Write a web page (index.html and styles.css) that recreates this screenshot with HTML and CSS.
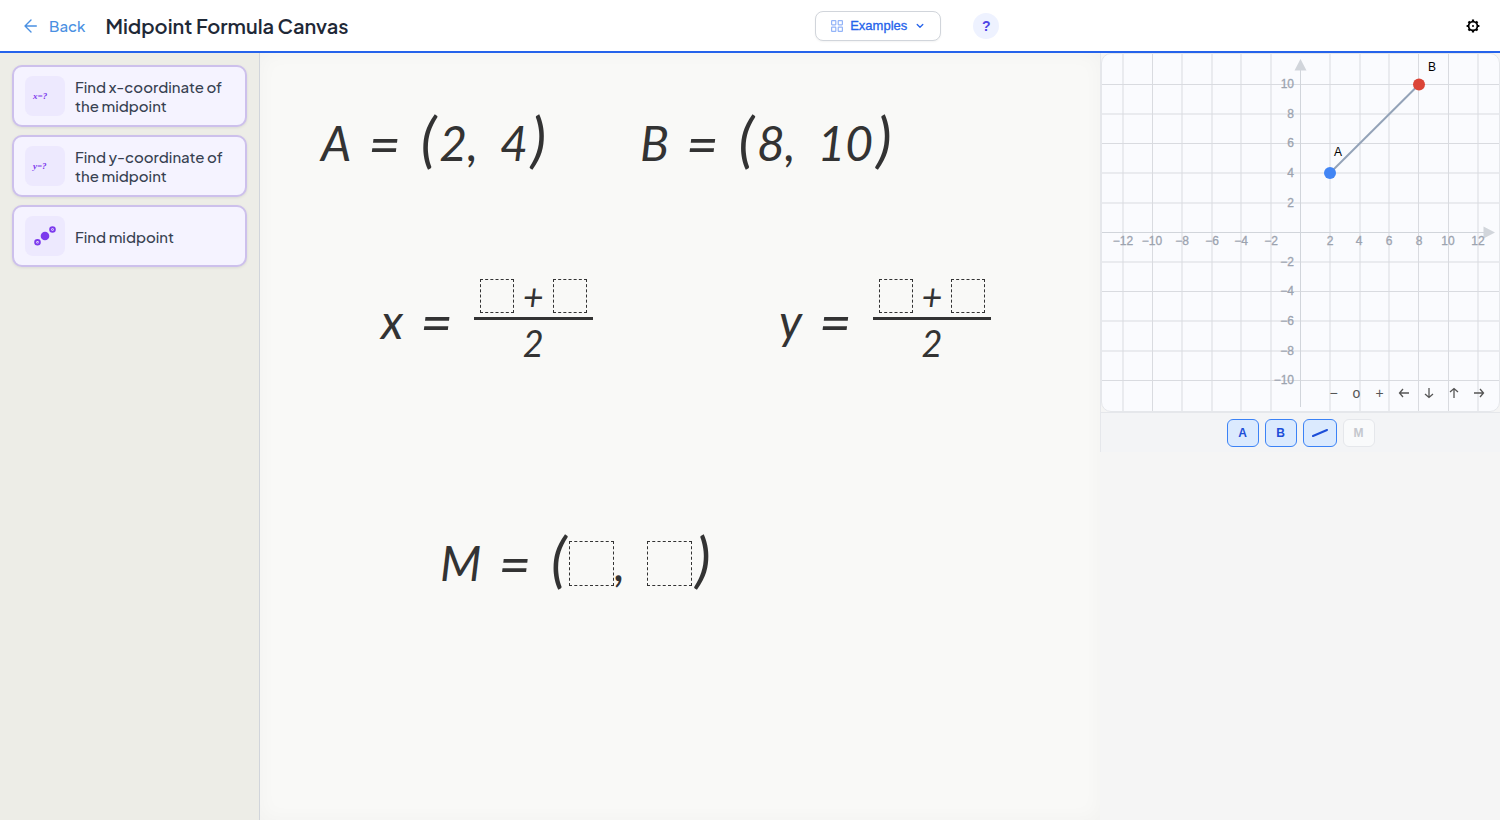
FILE: index.html
```
<!DOCTYPE html>
<html lang="en">
<head>
  <meta charset="UTF-8" />
  <meta name="viewport" content="width=device-width, initial-scale=1.0"/>
  <title>Midpoint Formula Canvas</title>
  <link rel="stylesheet" href="styles.css">
</head>
<body>
  <header class="topbar">
    <div class="topbar-left">
      <a href="#" class="back">
        <svg width="13" height="14" viewBox="0 0 13 14" fill="none" stroke="currentColor" stroke-width="1.4" stroke-linecap="round" stroke-linejoin="round"><path d="M12.3 7H1M7 1L1 7l6 6"/></svg>
        Back
      </a>
      <h1>Midpoint Formula Canvas</h1>
    </div>
    <div class="topbar-center">
      <button class="examples">
        <svg width="12" height="12" viewBox="0 0 12 12" fill="none" stroke="#93b4f8" stroke-width="1.2"><rect x="0.6" y="0.6" width="4.2" height="4.2" rx="0.5"/><rect x="7.2" y="0.6" width="4.2" height="4.2" rx="0.5"/><rect x="0.6" y="7.2" width="4.2" height="4.2" rx="0.5"/><rect x="7.2" y="7.2" width="4.2" height="4.2" rx="0.5"/></svg>
        <span>Examples</span>
        <svg class="chevron" width="8" height="6" viewBox="0 0 8 6" fill="none" stroke="currentColor" stroke-width="1.3" stroke-linecap="round" stroke-linejoin="round"><path d="M1.2 1.5L4 4.3l2.8-2.8"/></svg>
      </button>
      <button class="help">?</button>
    </div>
    <button class="settings" aria-label="Settings">
      <svg width="14" height="14" viewBox="0 0 14 14" fill="none" stroke="#000"><circle cx="7" cy="7" r="4.4" stroke-width="1.8"/><circle cx="7" cy="7" r="1" fill="#000" stroke="none"/><path stroke-width="2.2" d="M7 2.6V.6M7 11.4v2M2.6 7H.6M11.4 7h2M3.9 3.9L2.5 2.5M10.1 10.1l1.4 1.4M3.9 10.1l-1.4 1.4M10.1 3.9l1.4-1.4"/></svg>
    </button>
  </header>

  <main class="workspace">
    <aside class="sidebar">
      <button class="step">
        <span class="step-icon"><span class="step-formula">x=?</span></span>
        <span class="step-label">Find x-coordinate of the midpoint</span>
      </button>
      <button class="step">
        <span class="step-icon"><span class="step-formula">y=?</span></span>
        <span class="step-label">Find y-coordinate of the midpoint</span>
      </button>
      <button class="step">
        <span class="step-icon">
          <svg width="24" height="24" viewBox="0 0 24 24" fill="none" stroke="#7c3aed" stroke-width="2"><circle cx="12" cy="12" r="4.3" fill="#7c3aed" stroke="none"/><circle cx="19.5" cy="5.5" r="2.3" fill="#ede9fe"/><circle cx="4.5" cy="18.3" r="2.3" fill="#ede9fe"/><path stroke-width="0.8" d="M4 17.8l1.2 1.2M19 5l1 1"/></svg>
        </span>
        <span class="step-label">Find midpoint</span>
      </button>
    </aside>

    <section class="canvas">
      <div class="expr expr-a">
        <span>A</span><span class="equals">=</span>
        <span class="tuple"><span class="paren">(</span><span>2,</span><span class="second">4</span><span class="paren">)</span></span>
      </div>
      <div class="expr expr-b">
        <span>B</span><span class="equals">=</span>
        <span class="tuple"><span class="paren">(</span><span>8,</span><span class="second">10</span><span class="paren">)</span></span>
      </div>
      <div class="expr expr-x">
        <span>x</span><span class="equals">=</span>
        <span class="fraction">
          <span class="numerator"><span class="slot small"></span><span>+</span><span class="slot small"></span></span>
          <span class="denominator">2</span>
        </span>
      </div>
      <div class="expr expr-y">
        <span>y</span><span class="equals">=</span>
        <span class="fraction">
          <span class="numerator"><span class="slot small"></span><span>+</span><span class="slot small"></span></span>
          <span class="denominator">2</span>
        </span>
      </div>
      <div class="expr expr-m">
        <span>M</span><span class="equals">=</span>
        <span class="tuple"><span class="paren">(</span><span class="slot"></span><span>,</span><span class="slot second"></span><span class="paren">)</span></span>
      </div>
    </section>

    <aside class="graph-panel">
      <div class="board">
        <svg class="plot" viewBox="0 0 397 357">
          <path class="grid" d="M21 0V357M50.5 0V357M80 0V357M110 0V357M139 0V357M169 0V357M228 0V357M258 0V357M287 0V357M316.5 0V357M346.5 0V357M376 0V357M0 30.5H397M0 60H397M0 89.5H397M0 119H397M0 149H397M0 208H397M0 237.5H397M0 267H397M0 297H397M0 326.5H397"/>
          <path class="axis" d="M0 178.5H384M198.5 16V353"/>
          <path class="arrow" d="M198.5 5l6 11.5h-12zM393 178.5l-11.5-6v12z"/>
          <g class="ticks x-ticks">
            <text x="21" y="191">−12</text><text x="50" y="191">−10</text><text x="80" y="191">−8</text><text x="110" y="191">−6</text><text x="139" y="191">−4</text><text x="169" y="191">−2</text>
            <text x="228" y="191">2</text><text x="257" y="191">4</text><text x="287" y="191">6</text><text x="317" y="191">8</text><text x="346" y="191">10</text><text x="376" y="191">12</text>
          </g>
          <g class="ticks y-ticks">
            <text x="192" y="34">10</text><text x="192" y="64">8</text><text x="192" y="93">6</text><text x="192" y="123">4</text><text x="192" y="153">2</text>
            <text x="192" y="212">−2</text><text x="192" y="241">−4</text><text x="192" y="271">−6</text><text x="192" y="301">−8</text><text x="192" y="330">−10</text>
          </g>
          <path class="segment" d="M228 119L317 30.5"/>
          <circle cx="228" cy="119" r="6" fill="#4285f4"/>
          <circle cx="317" cy="30.5" r="6" fill="#db4437"/>
          <text class="point" x="232" y="102">A</text>
          <text class="point" x="326" y="17">B</text>
        </svg>
        <div class="nav">
          <button aria-label="Zoom out">−</button>
          <button aria-label="Reset view">o</button>
          <button aria-label="Zoom in">+</button>
          <button class="pan" aria-label="Pan left"><svg width="12" height="12" viewBox="0 0 12 12"><path d="M11 6H1.5M5 2L1.5 6 5 10"/></svg></button>
          <button class="pan" aria-label="Pan down"><svg width="12" height="12" viewBox="0 0 12 12"><path d="M6 1v9.5M2 7l4 3.5L10 7"/></svg></button>
          <button class="pan" aria-label="Pan up"><svg width="12" height="12" viewBox="0 0 12 12"><path d="M6 11V1.5M2 5l4-3.5L10 5"/></svg></button>
          <button class="pan" aria-label="Pan right"><svg width="12" height="12" viewBox="0 0 12 12"><path d="M1 6h9.5M7 2l3.5 4L7 10"/></svg></button>
        </div>
      </div>
      <div class="toggles">
        <button class="toggle active">A</button>
        <button class="toggle active">B</button>
        <button class="toggle active" aria-label="Segment"><svg width="16" height="8" viewBox="0 0 16 8"><path d="M1 7L15 1" stroke="#1d4ed8" stroke-width="2" stroke-linecap="round"/></svg></button>
        <button class="toggle" disabled>M</button>
      </div>
    </aside>
  </main>
</body>
</html>
```
FILE: styles.css
```
* {
  box-sizing: border-box;
}

body {
  margin: 0;
  min-height: 100vh;
  display: flex;
  flex-direction: column;
  background: #f5f5f5;
  font-family: 'Plus Jakarta Sans', Inter, sans-serif;
  color: #1f2937;
}

button {
  font-family: inherit;
  cursor: pointer;
}

.topbar {
  display: flex;
  align-items: center;
  justify-content: space-between;
  height: 53px;
  padding: 0 20px 0 24px;
  background: #fff;
  border-bottom: 2px solid #2563eb;
}

.topbar-left {
  display: flex;
  align-items: center;
  gap: 20px;
}

.back {
  display: flex;
  align-items: center;
  gap: 12px;
  color: #4a90e2;
  font-size: 15px;
  font-weight: 500;
  text-decoration: none;
}

h1 {
  margin: 0;
  font-size: 20px;
  font-weight: 600;
}

.topbar-center {
  display: flex;
  align-items: center;
  gap: 32px;
}

.examples {
  display: flex;
  align-items: center;
  gap: 7px;
  height: 30px;
  padding: 0 16px 0 15px;
  border: 1px solid #d1d5db;
  border-radius: 8px;
  background: #fff;
  box-shadow: 0 1px 2px rgba(0, 0, 0, 0.05);
  color: #2563eb;
  font-family: 'Liberation Sans', Arial, sans-serif;
  font-size: 13px;
  -webkit-text-stroke: 0.3px;
}

.chevron {
  margin-left: 2px;
}

.help {
  width: 26px;
  height: 26px;
  padding: 0;
  border: none;
  border-radius: 50%;
  background: #eef2ff;
  color: #4f46e5;
  font-family: 'Liberation Sans', Arial, sans-serif;
  font-size: 14px;
  font-weight: 700;
}

.settings {
  display: flex;
  padding: 0;
  border: none;
  background: none;
}

.workspace {
  flex: 1;
  display: grid;
  grid-template-columns: 260px 1fr 400px;
}

/* Sidebar */
.sidebar {
  display: flex;
  flex-direction: column;
  gap: 8px;
  padding: 12px;
  background: #edede7;
  border-right: 1px solid #d1d5db;
}

.step {
  display: flex;
  align-items: center;
  gap: 10px;
  padding: 9px 11px;
  border: 2px solid #cdc0ec;
  border-radius: 10px;
  background: #f5f3ff;
  box-shadow: 0 1px 3px rgba(0, 0, 0, 0.08);
  text-align: left;
}

.step-icon {
  flex: none;
  display: flex;
  align-items: center;
  width: 40px;
  height: 40px;
  padding: 0 8px;
  border-radius: 8px;
  background: #ede9fe;
}

.step-formula {
  color: #7c3aed;
  font: italic bold 9px 'Liberation Serif', serif;
}

.step-label {
  color: #374151;
  font-size: 15px;
  font-weight: 500;
  line-height: 19px;
}

/* Canvas */
.canvas {
  position: relative;
  background: #f9f9f7;
  box-shadow: inset 0 0 20px rgba(0, 0, 0, 0.03);
}

.expr {
  position: absolute;
  display: flex;
  align-items: center;
  gap: 17px;
  height: 80px;
  color: #333;
  font: italic 48px/56px Lato, sans-serif;
}

.expr-a {
  left: 61px;
  top: 50px;
}

.expr-b {
  left: 380px;
  top: 50px;
}

.expr-x {
  left: 121px;
  top: 228px;
}

.expr-y {
  left: 519px;
  top: 228px;
}

.expr-m {
  left: 180px;
  top: 470px;
}

.equals {
  font-size: 56px;
}

.tuple {
  display: flex;
  align-items: center;
}

.paren {
  padding: 0 3px 10px;
  font-size: 60px;
  line-height: 52px;
}

.second {
  margin-left: 22px;
}

.slot {
  width: 45px;
  height: 45px;
  border: 1px dashed #333;
}

.slot.small {
  width: 34px;
  height: 34px;
}

.fraction {
  display: flex;
  flex-direction: column;
  align-items: center;
  margin-left: 4px;
  font-size: 36px;
  line-height: 40px;
}

.numerator {
  display: flex;
  align-items: center;
  gap: 9px;
  padding: 0 6px 4px;
  border-bottom: 3px solid #333;
}

.numerator > span {
  line-height: 34px;
}

.denominator {
  padding-top: 3px;
}

/* Graph */
.graph-panel {
  border-left: 1px solid #e5e7eb;
  align-self: start;
  font-family: 'Liberation Sans', Arial, sans-serif;
}

.board {
  position: relative;
  border: 1px solid #e5e7eb;
  border-radius: 10px;
  background: #fafbfe;
  overflow: hidden;
}

.plot {
  display: block;
  width: 100%;
}

.grid {
  stroke: #d9dbe0;
}

.axis {
  stroke: #d1d5db;
}

.arrow {
  fill: #d1d5db;
}

.ticks {
  fill: #9ca3af;
  stroke: #9ca3af;
  stroke-width: 0.3px;
  font-size: 12px;
}

.x-ticks {
  text-anchor: middle;
}

.y-ticks {
  text-anchor: end;
}

.segment {
  stroke: #94a3b8;
  stroke-width: 2px;
}

.point {
  fill: #000;
  font-size: 12px;
}

.nav {
  position: absolute;
  right: 8px;
  bottom: 8px;
  display: flex;
}

.nav button {
  display: flex;
  align-items: center;
  justify-content: center;
  width: 23px;
  height: 20px;
  padding: 0;
  border: none;
  background: none;
  color: #555;
  font-size: 14px;
}

.nav .pan {
  width: 25px;
}

.nav svg {
  fill: none;
  stroke: #555;
  stroke-width: 1.3px;
}

.toggles {
  display: flex;
  justify-content: center;
  gap: 6px;
  padding: 6px 0 5px;
  border-top: 1px solid #e5e7eb;
  background: #f3f4f6;
}

.toggle {
  min-width: 32px;
  height: 28px;
  padding: 0 8px;
  border: 1px solid #e5e7eb;
  border-radius: 6px;
  background: #f9fafb;
  color: #c4c7cd;
  font-size: 12px;
  font-weight: 700;
}

.toggle.active {
  border-color: #3b82f6;
  background: #dbeafe;
  color: #1d4ed8;
}
```
